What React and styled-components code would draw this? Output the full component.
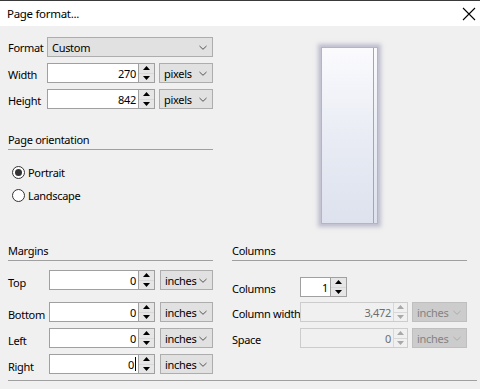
import React from "react"
import styled, { createGlobalStyle } from "styled-components"

const Global = createGlobalStyle`
  html, body {
    margin: 0;
    padding: 0;
    background: #f0f0f0;
  }
  * {
    box-sizing: border-box;
  }
`

const Window = styled.div`
  width: 480px;
  height: 389px;
  overflow: hidden;
  background: #f0f0f0;
  border-top: 1px solid #3a3a3a;
  font-family: "Noto Sans", "Open Sans", sans-serif;
  font-size: 11px;
  letter-spacing: -0.3px;
  color: #000;
`

const TitleBar = styled.div`
  height: 25px;
  background: #fff;
  display: flex;
  align-items: center;
  justify-content: space-between;
  padding: 0 4px 0 7px;
  font-size: 11.5px;
`

const Body = styled.div`
  padding: 11px 8px 0 8px;
`

const TopSection = styled.div`
  display: flex;
  height: 206px;
`

const LeftCol = styled.div`
  width: 205px;
  display: flex;
  flex-direction: column;
`

const Row = styled.div`
  display: flex;
  align-items: center;
  height: 20px;
  margin-top: ${(p) => p.$mt || 0}px;
`

const Label = styled.div`
  width: ${(p) => p.$w}px;
  flex: none;
  padding-top: ${(p) => p.$drop || 0}px;
  white-space: nowrap;
`

const SpinBox = styled.div`
  display: flex;
  height: 20px;
  width: ${(p) => p.$w}px;
  border: 1px solid ${(p) => (p.$disabled ? "#cccccc" : "#a0a0a0")};
  background: ${(p) => (p.$disabled ? "#f0f0f0" : "#fff")};
  color: ${(p) => (p.$disabled ? "#6d6d6d" : "#000")};
`

const SpinText = styled.div`
  flex: 1;
  padding-right: 2px;
  display: flex;
  justify-content: flex-end;
  align-items: center;
`

const Caret = styled.span`
  display: inline-block;
  width: 1px;
  height: 14px;
  background: #000;
  margin-left: 1px;
`

const Spinner = styled.div`
  width: ${(p) => (p.$disabled ? 14 : 16)}px;
  display: flex;
  flex-direction: column;
  border-left: 1px solid ${(p) => (p.$disabled ? "#d8d8d8" : "#a0a0a0")};
`

const SpinButton = styled.div`
  flex: 1;
  display: flex;
  align-items: center;
  justify-content: center;
  background: ${(p) => (p.$disabled ? "#f0f0f0" : "#e6e6e6")};
  & + & {
    border-top: 1px solid ${(p) => (p.$disabled ? "#d8d8d8" : "#a0a0a0")};
  }
`

const Combo = styled.div`
  height: 20px;
  width: ${(p) => p.$w}px;
  margin-left: ${(p) => p.$ml || 0}px;
  display: flex;
  align-items: center;
  justify-content: space-between;
  padding: 0 5px 0 4px;
  background: ${(p) => (p.$disabled ? "#cccccc" : "#e1e1e1")};
  border: 1px solid ${(p) => (p.$disabled ? "#bfbfbf" : "#adadad")};
  color: ${(p) => (p.$disabled ? "#838383" : "#000")};
`

const Heading = styled.div`
  height: 18px;
  line-height: 16px;
  border-bottom: 1px solid #a0a0a0;
  margin-top: ${(p) => p.$mt || 0}px;
`

const RadioRow = styled.div`
  display: flex;
  align-items: center;
  height: 16px;
  margin-top: ${(p) => p.$mt}px;
  padding-left: 4px;
`

const RadioCircle = styled.div`
  width: 13px;
  height: 13px;
  border-radius: 50%;
  border: 1px solid #333;
  background: #fff;
  display: flex;
  align-items: center;
  justify-content: center;
  margin-right: 3px;
  &::after {
    content: "";
    display: ${(p) => (p.$checked ? "block" : "none")};
    width: 7px;
    height: 7px;
    border-radius: 50%;
    background: #333;
  }
`

const PreviewArea = styled.div`
  flex: 1;
  padding: 10px 0 0 108px;
`

const PageSheet = styled.div`
  width: 57px;
  height: 177px;
  border: 1px solid #aeaef0;
  background: linear-gradient(180deg, #fbfbfe 0%, #e9ecf4 50%, #dde2ee 100%);
  box-shadow: 0 0 4px 3px rgba(150, 150, 180, 0.55);
  display: flex;
  justify-content: flex-end;
  padding-right: 3px;
`

const MarginLine = styled.div`
  width: 1px;
  background: #9d9def;
`

const BottomSection = styled.div`
  display: flex;
  gap: 19px;
`

const Group = styled.div`
  width: ${(p) => p.$w}px;
  display: flex;
  flex-direction: column;
`

const Divider = styled.div`
  height: 1px;
  background: #a0a0a0;
  width: 469px;
  margin-top: 6px;
`

const Chevron = ({ color = "#444" }) => (
  <svg width="8" height="5" viewBox="0 0 8 5">
    <polyline points="0.5,1 4,4.3 7.5,1" fill="none" stroke={color} strokeWidth="0.9" />
  </svg>
)

const Arrow = ({ up, color }) => (
  <svg width="7" height="4" viewBox="0 0 7 4">
    <polygon points={up ? "3.5,0 7,4 0,4" : "0,0 7,0 3.5,4"} fill={color} />
  </svg>
)

const Spin = ({ value, width, disabled, caret }) => (
  <SpinBox $w={width} $disabled={disabled}>
    <SpinText>
      {value}
      {caret && <Caret />}
    </SpinText>
    <Spinner $disabled={disabled}>
      <SpinButton $disabled={disabled}>
        <Arrow up color={disabled ? "#a8a8a8" : "#000"} />
      </SpinButton>
      <SpinButton $disabled={disabled}>
        <Arrow color={disabled ? "#a8a8a8" : "#000"} />
      </SpinButton>
    </Spinner>
  </SpinBox>
)

const Select = ({ value, width, ml, disabled }) => (
  <Combo $w={width} $ml={ml} $disabled={disabled}>
    <span>{value}</span>
    <Chevron color={disabled ? "#a8a8a8" : "#444"} />
  </Combo>
)

const margins = [
  { label: "Top", mt: 9 },
  { label: "Bottom", mt: 12 },
  { label: "Left", mt: 6 },
  { label: "Right", mt: 6, caret: true },
]

export default function App() {
  return (
    <>
      <Global />
      <Window>
        <TitleBar>
          <span>Page format...</span>
          <svg width="14" height="14" viewBox="0 0 14 14">
            <path d="M1 1 L13 13 M13 1 L1 13" stroke="#000" strokeWidth="1.1" />
          </svg>
        </TitleBar>
        <Body>
          <TopSection>
            <LeftCol>
              <Row>
                <Label $w={39}>Format</Label>
                <Select value="Custom" width={166} />
              </Row>
              <Row $mt={6}>
                <Label $w={39} $drop={2}>Width</Label>
                <Spin value="270" width={108} />
                <Select value="pixels" width={54} ml={4} />
              </Row>
              <Row $mt={6}>
                <Label $w={39} $drop={2}>Height</Label>
                <Spin value="842" width={108} />
                <Select value="pixels" width={54} ml={4} />
              </Row>
              <Heading $mt={23}>Page orientation</Heading>
              <RadioRow $mt={14}>
                <RadioCircle $checked />
                Portrait
              </RadioRow>
              <RadioRow $mt={7}>
                <RadioCircle />
                Landscape
              </RadioRow>
            </LeftCol>
            <PreviewArea>
              <PageSheet>
                <MarginLine />
              </PageSheet>
            </PreviewArea>
          </TopSection>
          <BottomSection>
            <Group $w={205}>
              <Heading>Margins</Heading>
              {margins.map((m) => (
                <Row key={m.label} $mt={m.mt}>
                  <Label $w={41} $drop={5}>{m.label}</Label>
                  <Spin value="0" width={106} caret={m.caret} />
                  <Select value="inches" width={53} ml={5} />
                </Row>
              ))}
            </Group>
            <Group $w={235}>
              <Heading>Columns</Heading>
              <Row $mt={16}>
                <Label $w={68} $drop={3}>Columns</Label>
                <Spin value="1" width={47} />
              </Row>
              <Row $mt={5}>
                <Label $w={68} $drop={2}>Column width</Label>
                <Spin value="3,472" width={108} disabled />
                <Select value="inches" width={55} ml={4} disabled />
              </Row>
              <Row $mt={6}>
                <Label $w={68} $drop={2}>Space</Label>
                <Spin value="0" width={108} disabled />
                <Select value="inches" width={55} ml={4} disabled />
              </Row>
            </Group>
          </BottomSection>
          <Divider />
        </Body>
      </Window>
    </>
  )
}
